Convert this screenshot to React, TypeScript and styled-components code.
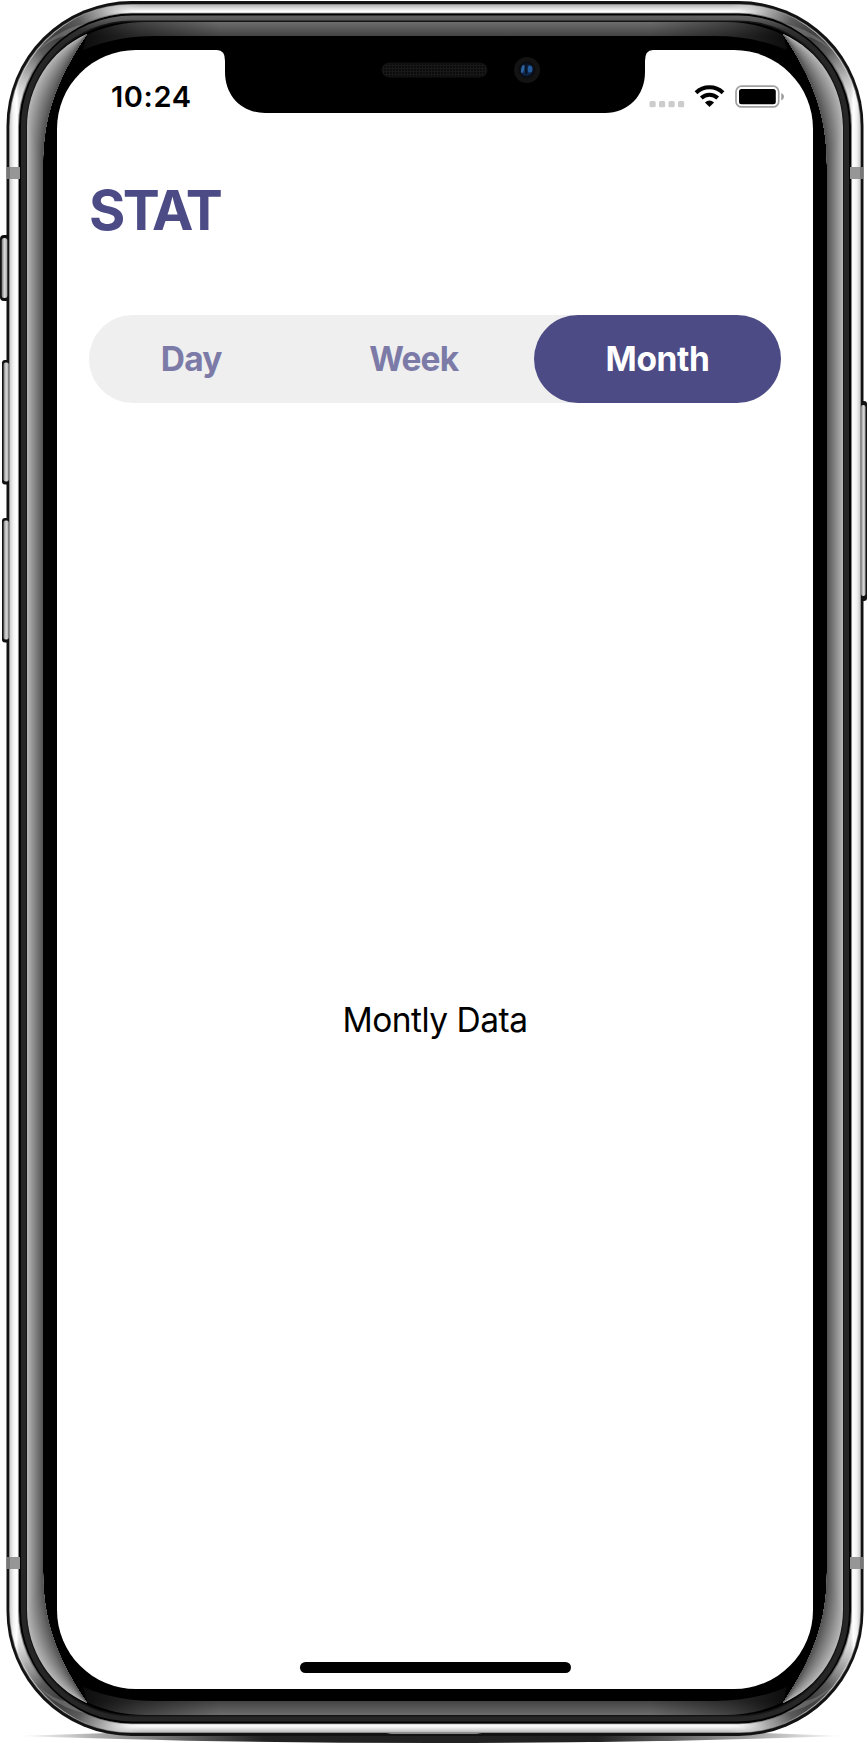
import React, { useState } from "react";
import styled, { createGlobalStyle } from "styled-components";

const GlobalStyle = createGlobalStyle`
  body { margin: 0; background: #fff; font-family: Inter, "Liberation Sans", sans-serif; }
  * { box-sizing: border-box; }
`;

const ACCENT = "#4c4b86";

const Device = styled.div`
  position: relative;
  width: 868px;
  height: 1743px;
  padding: 50px 55px 54px 57px;
  overflow: hidden;
`;

const BezelArt = styled.svg`
  position: absolute;
  inset: 0;
`;

const NotchArt = styled.svg`
  position: absolute;
  top: -1px;
  left: 160px;
`;

const Screen = styled.main`
  position: relative;
  display: flex;
  flex-direction: column;
  width: 756px;
  height: 1639px;
  border-radius: 79px;
  background: #fff;
`;

const StatusBar = styled.header`
  display: flex;
  justify-content: space-between;
  height: 94px;
  padding: 29px 28px 0 54px;
`;

const Time = styled.span`
  font-size: 29px;
  font-weight: 600;
  line-height: 36px;
  letter-spacing: 0.6px;
`;

const StatusIcons = styled.div`
  display: flex;
  align-items: flex-start;
  padding-top: 4px;
`;

const Title = styled.h1`
  height: 66px;
  margin: 33px 0 0 32px;
  color: ${ACCENT};
  font-size: 55.5px;
  font-weight: 700;
  line-height: 66px;
  letter-spacing: -2.7px;
`;

const Segments = styled.div`
  display: flex;
  width: 692px;
  height: 87.5px;
  margin: 72px 0 0 32px;
  border-radius: 44px;
  background: #efefef;
`;

const Segment = styled.button<{ $active: boolean; $width: number; $tracking: number }>`
  width: ${(p) => p.$width}px;
  padding: 1px 0 0;
  border: 0;
  border-radius: 44px;
  background: ${(p) => (p.$active ? ACCENT : "transparent")};
  color: ${(p) => (p.$active ? "#fff" : "#7c7ba8")};
  font-family: inherit;
  font-size: 33.5px;
  font-weight: 650;
  letter-spacing: ${(p) => p.$tracking}px;
`;

const Content = styled.section`
  display: flex;
  flex: 1;
  align-items: center;
  justify-content: center;
  padding-bottom: 25px;
  font-size: 33.5px;
  line-height: 40px;
  letter-spacing: -0.5px;
`;

const HomeIndicator = styled.div`
  width: 270.5px;
  height: 10.4px;
  margin: 0 0 16.4px 243px;
  border-radius: 6px;
  background: #000;
`;

/* Shades of the side reflection, from its bright outer edge to its dark inner one. */
const sideLayers = Array.from({ length: 17 }, (_, i) => {
  const t = i / 16;
  const mix = (a: number, b: number) => (a + (b - a) * t).toFixed(2);
  const v = Math.round(180 - t * 102);
  return {
    d: `M${mix(27, 43)} 870 V${mix(127, 165)} C${mix(27, 43)} ${mix(87, 117)} ${mix(50, 56)} ${mix(50, 80)} 87 34 C56 80 43 117 43 165 V870Z`,
    fill: `rgb(${v},${v},${v})`,
  };
});

function Ring({ x, y, r, fill }: { x: number; y: number; r: number; fill: string }) {
  return <rect x={x} y={y} width={870 - 2 * x} height={1737 - 2 * y} rx={r} fill={fill} />;
}

/* The glossy reflection in one corner; the other three are mirrored. */
function CornerShine() {
  return (
    <g>
      <g clipPath="url(#metalBand)">
        <rect x="0" y="0" width="180" height="150" fill="url(#cornerShade)" />
        <path d="M38 51 C50 37 66 28 84 24 L75 34 C57 36 46 43 35 54Z" fill="#999" opacity=".4" />
      </g>
      <path d="M87 35 C105 26 126 22 145 22 H436 V36 H155 C130 36 107 40 83 50Z" fill="url(#topShine)" />
      <path d="M87 34 C105 25 126 21.5 145 21.5 H220 V36.5 H155 C130 36.5 107 41 82 51Z" fill="url(#shineFade)" />
      {sideLayers.map((layer) => (
        <path key={layer.d} d={layer.d} fill={layer.fill} />
      ))}
    </g>
  );
}

function Bezel() {
  return (
    <BezelArt width="868" height="1743" viewBox="0 0 868 1743" aria-hidden="true">
      <defs>
        <clipPath id="metalBand">
          <path d="M9.5 130 A122 125.5 0 0 1 131.5 4.5 H180 V13.5 H132 A113 115 0 0 0 19 128.5 V150 H9.5Z" />
        </clipPath>
        <linearGradient id="edgeFade" gradientUnits="userSpaceOnUse" x1="100" y1="0" x2="770" y2="0">
          <stop offset="0" stopColor="#000" />
          <stop offset=".06" stopColor="#fff" />
          <stop offset=".94" stopColor="#fff" />
          <stop offset="1" stopColor="#000" />
        </linearGradient>
        <mask id="straightPart" maskUnits="userSpaceOnUse" x="0" y="0" width="868" height="1743">
          <rect width="868" height="1743" fill="url(#edgeFade)" />
        </mask>
        <radialGradient id="cornerShade" gradientUnits="userSpaceOnUse" cx="60" cy="36" r="76">
          <stop offset="0" stopColor="#3c3c3c" />
          <stop offset=".32" stopColor="#505050" stopOpacity=".92" />
          <stop offset=".64" stopColor="#777" stopOpacity=".55" />
          <stop offset="1" stopColor="#aaa" stopOpacity="0" />
        </radialGradient>
        <linearGradient id="metalLR" gradientUnits="userSpaceOnUse" x1="9" y1="0" x2="861" y2="0">
          <stop offset="0" stopColor="#c4c4c4" />
          <stop offset=".005" stopColor="#f2f2f2" />
          <stop offset=".009" stopColor="#fff" />
          <stop offset=".012" stopColor="#e4e4e4" />
          <stop offset=".988" stopColor="#e4e4e4" />
          <stop offset=".991" stopColor="#fff" />
          <stop offset=".995" stopColor="#f2f2f2" />
          <stop offset="1" stopColor="#c4c4c4" />
        </linearGradient>
        <linearGradient id="metalTop" gradientUnits="userSpaceOnUse" x1="0" y1="4" x2="0" y2="13.5">
          <stop offset="0" stopColor="#777" />
          <stop offset=".15" stopColor="#b9b9b9" />
          <stop offset=".8" stopColor="#fff" />
          <stop offset="1" stopColor="#eee" />
        </linearGradient>
        <linearGradient id="metalBottom" gradientUnits="userSpaceOnUse" x1="0" y1="1723" x2="0" y2="1733">
          <stop offset="0" stopColor="#fff" />
          <stop offset=".4" stopColor="#f5f5f5" />
          <stop offset=".85" stopColor="#c4c4c4" />
          <stop offset="1" stopColor="#777" />
        </linearGradient>
        <linearGradient id="topShine" gradientUnits="userSpaceOnUse" x1="0" y1="22" x2="0" y2="36">
          <stop offset="0" stopColor="#6c6c6c" />
          <stop offset="1" stopColor="#434343" />
        </linearGradient>
        <linearGradient id="shineFade" gradientUnits="userSpaceOnUse" x1="83" y1="0" x2="220" y2="0">
          <stop offset="0" stopColor="#000" stopOpacity=".82" />
          <stop offset=".4" stopColor="#000" stopOpacity=".4" />
          <stop offset="1" stopColor="#000" stopOpacity="0" />
        </linearGradient>
        <linearGradient id="gutter" gradientUnits="userSpaceOnUse" x1="0" y1="15.5" x2="0" y2="45">
          <stop offset="0" stopColor="#626262" />
          <stop offset=".17" stopColor="#555" />
          <stop offset=".5" stopColor="#303030" />
          <stop offset="1" stopColor="#262626" />
        </linearGradient>
        <linearGradient id="ground" x1="0" y1="0" x2="1" y2="0">
          <stop offset="0" stopColor="#bbb" stopOpacity="0" />
          <stop offset=".1" stopColor="#aaa" />
          <stop offset=".3" stopColor="#222" />
          <stop offset=".7" stopColor="#222" />
          <stop offset=".9" stopColor="#aaa" />
          <stop offset="1" stopColor="#bbb" stopOpacity="0" />
        </linearGradient>
        <linearGradient id="key" x1="0" y1="0" x2="1" y2="0">
          <stop offset="0" stopColor="#777" />
          <stop offset=".5" stopColor="#d8d8d8" />
          <stop offset="1" stopColor="#aaa" />
        </linearGradient>
      </defs>

      <path d="M15 1736 L110 1733 H760 L845 1736 L745 1739 Q600 1743 434 1743 Q260 1743 120 1739Z" fill="url(#ground)" />

      <rect x="0" y="235" width="12" height="66" rx="4" fill="#111" />
      <rect x="2" y="360" width="10" height="124.5" rx="3" fill="#111" />
      <rect x="2" y="518" width="10" height="124.5" rx="3" fill="#111" />
      <rect x="858" y="401" width="9" height="200" rx="3" fill="#111" />

      <Ring x={6.5} y={1} r={125} fill="#121212" />
      <Ring x={9} y={4} r={122.5} fill="#777" />
      <Ring x={9.7} y={4.7} r={122} fill="url(#metalLR)" />
      <g mask="url(#straightPart)">
        <path d="M100 8.5 Q116 4.3 134 4 H736 Q754 4.3 770 8.5 V16 H100Z" fill="url(#metalTop)" />
        <path d="M100 1728.5 Q116 1732.7 134 1733 H736 Q754 1732.7 770 1728.5 V1721 H100Z" fill="url(#metalBottom)" />
      </g>
      <Ring x={18} y={12.8} r={113.5} fill="#888" />
      <Ring x={19} y={13.5} r={113} fill="#020202" />
      <Ring x={21} y={15.5} r={111} fill="url(#gutter)" />
      <Ring x={26} y={20.5} r={106} fill="#151515" />
      <Ring x={27} y={22} r={105} fill="#000" />

      <g id="shine"><CornerShine /></g>
      <use href="#shine" transform="translate(870 0) scale(-1 1)" />
      <use href="#shine" transform="translate(0 1737) scale(1 -1)" />
      <use href="#shine" transform="translate(870 1737) scale(-1 -1)" />

      <rect x="1.7" y="238" width="5.6" height="60" rx="2.5" fill="url(#key)" />
      <rect x="3.5" y="362.5" width="5.2" height="119" rx="2" fill="url(#key)" />
      <rect x="3.5" y="520.5" width="5.2" height="119" rx="2" fill="url(#key)" />
      <rect x="861" y="405" width="4.5" height="191" rx="2" fill="url(#key)" />

      {[167, 1557].map((y) => (
        <g key={y} fill="#969696">
          <rect x="7" y={y} width="13" height="12" />
          <rect x="850" y={y} width="13" height="12" />
          <rect x="7" y={y} width="3" height="12" fill="#777" />
          <rect x="860" y={y} width="3" height="12" fill="#777" />
        </g>
      ))}
      <path d="M386 1734 L393 1732.8 H475 L482 1734Z" fill="#888" />
    </BezelArt>
  );
}

function Notch() {
  return (
    <NotchArt width="436" height="66" viewBox="217 49 436 66" aria-hidden="true">
      <defs>
        <pattern id="mesh" width="3" height="3" patternUnits="userSpaceOnUse">
          <rect width="3" height="3" fill="#181818" />
          <circle cx="1" cy="1" r=".9" fill="#060606" />
        </pattern>
        <radialGradient id="lens">
          <stop offset="0" stopColor="#143a6d" />
          <stop offset=".6" stopColor="#102b52" />
          <stop offset="1" stopColor="#070c16" />
        </radialGradient>
      </defs>
      <path d="M217 49 V50 Q225 50 225 61 V72 C225 96 242 113 265 113 H605 C628 113 645 96 645 72 V61 Q645 50 653 50 V49Z" />
      <rect x="382" y="63" width="105" height="14" rx="7" fill="url(#mesh)" stroke="#131313" />
      <circle cx="527" cy="70" r="13" fill="#131313" />
      <circle cx="527" cy="70" r="8.5" fill="#0b0d11" />
      <circle cx="526.5" cy="70" r="7" fill="url(#lens)" />
      <ellipse cx="522.7" cy="69" rx="1.4" ry="4" fill="#2f659c" transform="rotate(12 522.7 69)" />
      <ellipse cx="530" cy="69" rx="2.5" ry="3.6" fill="#235a99" />
      <path d="M525 64 H527.5 V74 H525Z" fill="#081426" />
    </NotchArt>
  );
}

function StatusGlyphs() {
  return (
    <svg width="138" height="26" viewBox="647 83 138 26" aria-hidden="true">
      {[649.5, 659, 668.5, 678].map((x) => (
        <rect key={x} x={x} y="101" width="6.2" height="6.2" rx="1.5" fill="#ccc" />
      ))}
      <g fill="none" stroke="#000" strokeWidth="4">
        <path d="M696 92.7 A19.5 19.5 0 0 1 723 92.7" />
        <path d="M701.3 98 A12 12 0 0 1 717.7 98" />
      </g>
      <path d="M709.5 107 L704.9 102.4 Q709.5 98.8 714.1 102.4Z" />
      <rect x="736" y="86.2" width="42.7" height="20.7" rx="5.5" fill="none" stroke="#a0a0a0" strokeWidth="1.7" />
      <rect x="739" y="89" width="36.8" height="15.2" rx="2.5" />
      <path d="M781.3 93 Q784 94 784 96.5 T781.3 100.5Z" fill="#999" />
    </svg>
  );
}

const tabs = [
  { label: "Day", width: 204.5, tracking: -0.7, text: "Daily Data" },
  { label: "Week", width: 240.5, tracking: -0.8, text: "Weekly Data" },
  { label: "Month", width: 247, tracking: -0.4, text: "Montly Data" },
];

export default function App() {
  const [selected, setSelected] = useState(2);
  return (
    <>
      <GlobalStyle />
      <Device>
        <Bezel />
        <Screen>
          <StatusBar>
            <Time>10:24</Time>
            <StatusIcons><StatusGlyphs /></StatusIcons>
          </StatusBar>
          <Title>STAT</Title>
          <Segments>
            {tabs.map((tab, i) => (
              <Segment key={tab.label} $active={i === selected} $width={tab.width} $tracking={tab.tracking} onClick={() => setSelected(i)}>
                {tab.label}
              </Segment>
            ))}
          </Segments>
          <Content>{tabs[selected].text}</Content>
          <HomeIndicator />
          <Notch />
        </Screen>
      </Device>
    </>
  );
}
